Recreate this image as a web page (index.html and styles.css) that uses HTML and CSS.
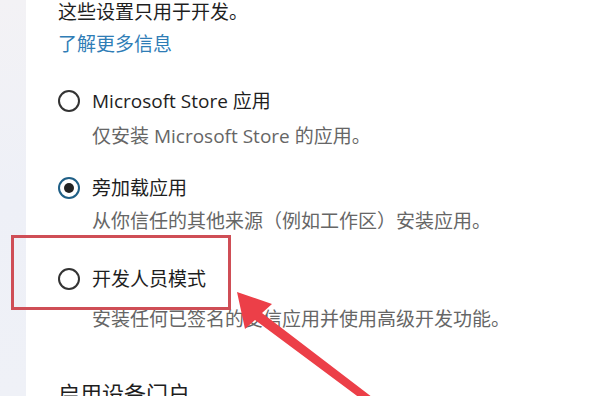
FILE: index.html
```html
<!DOCTYPE html>
<html lang="zh-CN">
<head>
<meta charset="utf-8">
<link rel="stylesheet" href="styles.css">
</head>
<body>
<div class="page">
  <aside class="sidebar"></aside>
  <main class="content">
    <p class="intro">这些设置只用于开发。</p>
    <a class="link" href="#">了解更多信息</a>
    <div class="option opt1">
      <div class="row"><span class="radio"></span><span class="label">Microsoft Store 应用</span></div>
      <p class="desc">仅安装 Microsoft Store 的应用。</p>
    </div>
    <div class="option opt2">
      <div class="row"><span class="radio checked"></span><span class="label">旁加载应用</span></div>
      <p class="desc">从你信任的其他来源（例如工作区）安装应用。</p>
    </div>
    <div class="option opt3">
      <div class="row"><span class="radio"></span><span class="label">开发人员模式</span></div>
      <p class="desc">安装任何已签名的受信应用并使用高级开发功能。</p>
    </div>
    <h2 class="section">启用设备门户</h2>
  </main>
</div>
<div class="highlight"></div>
<svg class="arrow" width="600" height="396" viewBox="0 0 600 396">
  <polygon points="237,292 245,329 255,320 380,413 385,407 262,313 272,304" fill="#ec3f48"/>
</svg>
</body>
</html>
```
FILE: styles.css
```css
html, body {
  margin: 0;
  padding: 0;
  background: #ffffff;
  width: 600px;
  height: 396px;
  overflow: hidden;
}
.page {
  display: flex;
  height: 396px;
  font-family: "Open Sans", "Noto Sans CJK SC", sans-serif;
}
.sidebar {
  width: 26px;
  flex: none;
  background: linear-gradient(180deg, #f3f2f5 0%, #eef0f7 50%, #eff1f7 100%);
}
.content {
  flex: 1;
  padding-left: 32px;
}
.intro {
  margin: 0;
  font-size: 19px;
  line-height: 24px;
  color: #1e1e1e;
}
.link {
  display: block;
  margin-top: 8px;
  font-size: 19px;
  line-height: 24px;
  color: #2f7db6;
  text-decoration: none;
}
.option .row {
  display: flex;
  align-items: center;
  height: 24px;
}
.radio {
  width: 18px;
  height: 18px;
  border: 2px solid #333333;
  border-radius: 50%;
  box-sizing: content-box;
  margin-right: 12px;
  display: flex;
  align-items: center;
  justify-content: center;
}
.radio.checked {
  border-color: #1f5f86;
}
.radio.checked::after {
  content: "";
  width: 10px;
  height: 10px;
  border-radius: 50%;
  background: #222222;
}
.label {
  font-size: 19px;
  line-height: 24px;
  color: #1e1e1e;
}
.desc {
  margin: 0;
  padding-left: 34px;
  font-size: 19px;
  line-height: 24px;
  color: #666666;
}
.opt1 { margin-top: 33px; }
.opt1 .desc { margin-top: 11px; }
.opt2 { margin-top: 28px; }
.opt2 .desc { margin-top: 9px; }
.opt3 { margin-top: 34px; }
.opt3 .desc { margin-top: 16px; }
.section {
  margin: 48px 0 0;
  font-size: 22px;
  line-height: 28px;
  font-weight: 400;
  color: #1e1e1e;
}
.highlight {
  position: absolute;
  left: 11px;
  top: 235px;
  width: 214px;
  height: 69px;
  border: 3px solid #cf4e56;
}
.arrow {
  position: absolute;
  left: 0;
  top: 0;
}
```
